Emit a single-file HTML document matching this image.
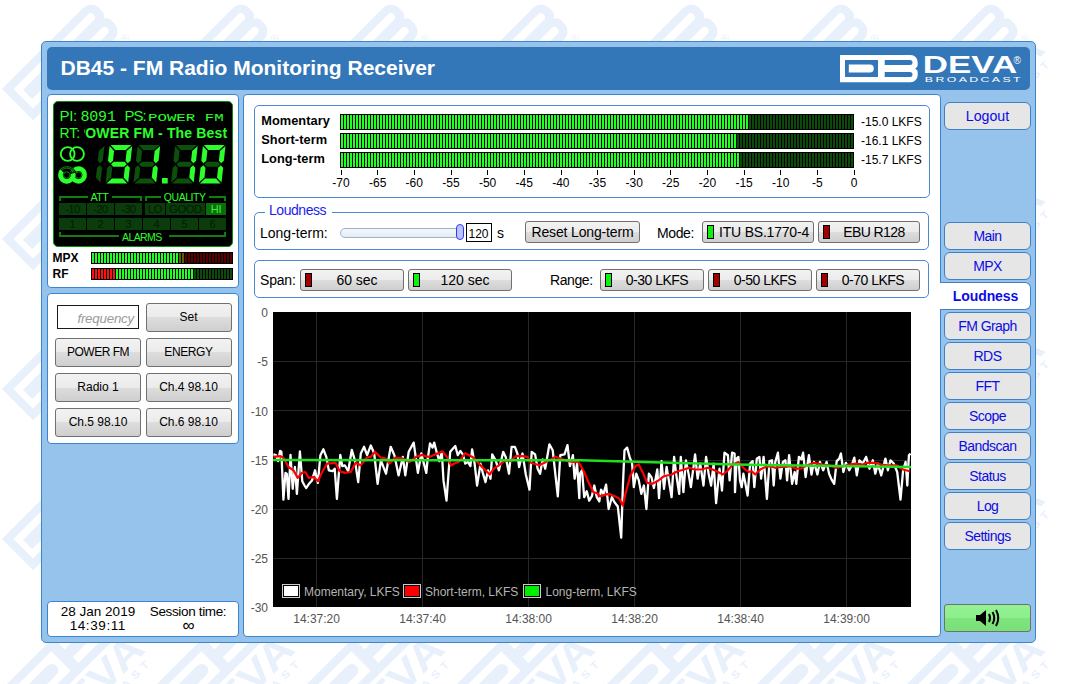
<!DOCTYPE html><html><head><meta charset="utf-8"><style>*{box-sizing:border-box;margin:0;padding:0}
html,body{width:1077px;height:684px;overflow:hidden;background:#fff;font-family:"Liberation Sans",sans-serif;color:#000}
.a{position:absolute}
#outer{left:41px;top:41px;width:995px;height:602px;background:#95c3ec;border:1px solid #3c85cd;border-radius:5px}
#hdr{left:47px;top:47px;width:983px;height:43px;background:#3477b8;border-radius:5px}
#title{left:60.5px;top:56.9px;line-height:21px;font-weight:bold;font-size:21px;letter-spacing:0px;color:#fff;white-space:nowrap}
.pnl{background:#fff;border:1px solid #3a85cf;border-radius:4px}
.box{border:1px solid #4a8ad2;border-radius:5px}
.t{position:absolute;white-space:nowrap}
.btn{position:absolute;border:1px solid #707070;border-radius:3px;background:linear-gradient(#f2f2f2 0%,#ebebeb 50%,#dddddd 50%,#cfcfcf 100%);font-size:14px;text-align:center;white-space:nowrap}
.btn.sm{font-size:12px}
.btn.grn{background:linear-gradient(#93f293 0%,#8cee8c 50%,#7fe47f 50%,#79e079 100%)}
.nav{position:absolute;left:944px;width:87px;height:28px;background:#e6e6e6;border:1px solid #3f80c8;border-radius:6px;color:#0c0ce4;font-size:14px;text-align:center;line-height:26.8px;letter-spacing:-0.55px}
.nav.sel{background:#fff;font-weight:bold;font-size:14px;letter-spacing:-0.1px;border-left:none;border-radius:0 6px 6px 0;left:941px;width:90px}
.ind{position:absolute;left:4px;top:3px;width:7px;height:14px;border:1px solid #000}
.g{background:#11ee11}.r{background:#a00000}
.bar{position:absolute;left:340px;width:514px;height:16px;border:1px solid #000;background:repeating-linear-gradient(90deg,#0c4a0c 0,#0c4a0c 2px,#000 2px,#000 3px)}
.lit{position:absolute;left:0;top:0;height:14px;background:repeating-linear-gradient(90deg,#22ff22 0,#22ff22 2px,#000 2px,#000 3px)}
</style></head><body>
<svg class="a" style="left:0;top:0" width="1077" height="684"><defs>
<pattern id="wmp" patternUnits="userSpaceOnUse" width="150" height="150" x="2.0" y="89.0">
<g transform="translate(-300,-300) rotate(-45) scale(1.62)"><g fill="#e8f0fc">
<path fill-rule="evenodd" d="M0 0 H70.5 A7 7 0 0 1 77.7 7 V8.5 A5 5 0 0 1 75 13.6 A5 5 0 0 1 77.7 18.7 V20.5 A7 7 0 0 1 70.5 27.2 H0 Z M5 5 V22 H38 V5 Z M44.7 5 V10 H70 A2.5 2.5 0 0 0 70 5 Z M44.7 17 V22 H70 A2.5 2.5 0 0 0 70 17 Z"/>
<path d="M8.8 9.6 H29.8 A4 4 0 0 1 29.8 17.6 H8.8 Z"/>
<text x="73.3" y="34" font-family="Liberation Sans" font-size="7">&#174;</text>
<text transform="translate(1.8,46.5) scale(1.2,1)" font-family="Liberation Sans" font-weight="bold" font-size="24">DEVA</text>
<text transform="translate(1,54.2) scale(1.2,1)" font-family="Liberation Sans" font-weight="bold" font-size="6.4" letter-spacing="2.6">BROADCAST</text>
</g></g>
<g transform="translate(-300,-150) rotate(-45) scale(1.62)"><g fill="#e8f0fc">
<path fill-rule="evenodd" d="M0 0 H70.5 A7 7 0 0 1 77.7 7 V8.5 A5 5 0 0 1 75 13.6 A5 5 0 0 1 77.7 18.7 V20.5 A7 7 0 0 1 70.5 27.2 H0 Z M5 5 V22 H38 V5 Z M44.7 5 V10 H70 A2.5 2.5 0 0 0 70 5 Z M44.7 17 V22 H70 A2.5 2.5 0 0 0 70 17 Z"/>
<path d="M8.8 9.6 H29.8 A4 4 0 0 1 29.8 17.6 H8.8 Z"/>
<text x="73.3" y="34" font-family="Liberation Sans" font-size="7">&#174;</text>
<text transform="translate(1.8,46.5) scale(1.2,1)" font-family="Liberation Sans" font-weight="bold" font-size="24">DEVA</text>
<text transform="translate(1,54.2) scale(1.2,1)" font-family="Liberation Sans" font-weight="bold" font-size="6.4" letter-spacing="2.6">BROADCAST</text>
</g></g>
<g transform="translate(-300,0) rotate(-45) scale(1.62)"><g fill="#e8f0fc">
<path fill-rule="evenodd" d="M0 0 H70.5 A7 7 0 0 1 77.7 7 V8.5 A5 5 0 0 1 75 13.6 A5 5 0 0 1 77.7 18.7 V20.5 A7 7 0 0 1 70.5 27.2 H0 Z M5 5 V22 H38 V5 Z M44.7 5 V10 H70 A2.5 2.5 0 0 0 70 5 Z M44.7 17 V22 H70 A2.5 2.5 0 0 0 70 17 Z"/>
<path d="M8.8 9.6 H29.8 A4 4 0 0 1 29.8 17.6 H8.8 Z"/>
<text x="73.3" y="34" font-family="Liberation Sans" font-size="7">&#174;</text>
<text transform="translate(1.8,46.5) scale(1.2,1)" font-family="Liberation Sans" font-weight="bold" font-size="24">DEVA</text>
<text transform="translate(1,54.2) scale(1.2,1)" font-family="Liberation Sans" font-weight="bold" font-size="6.4" letter-spacing="2.6">BROADCAST</text>
</g></g>
<g transform="translate(-300,150) rotate(-45) scale(1.62)"><g fill="#e8f0fc">
<path fill-rule="evenodd" d="M0 0 H70.5 A7 7 0 0 1 77.7 7 V8.5 A5 5 0 0 1 75 13.6 A5 5 0 0 1 77.7 18.7 V20.5 A7 7 0 0 1 70.5 27.2 H0 Z M5 5 V22 H38 V5 Z M44.7 5 V10 H70 A2.5 2.5 0 0 0 70 5 Z M44.7 17 V22 H70 A2.5 2.5 0 0 0 70 17 Z"/>
<path d="M8.8 9.6 H29.8 A4 4 0 0 1 29.8 17.6 H8.8 Z"/>
<text x="73.3" y="34" font-family="Liberation Sans" font-size="7">&#174;</text>
<text transform="translate(1.8,46.5) scale(1.2,1)" font-family="Liberation Sans" font-weight="bold" font-size="24">DEVA</text>
<text transform="translate(1,54.2) scale(1.2,1)" font-family="Liberation Sans" font-weight="bold" font-size="6.4" letter-spacing="2.6">BROADCAST</text>
</g></g>
<g transform="translate(-300,300) rotate(-45) scale(1.62)"><g fill="#e8f0fc">
<path fill-rule="evenodd" d="M0 0 H70.5 A7 7 0 0 1 77.7 7 V8.5 A5 5 0 0 1 75 13.6 A5 5 0 0 1 77.7 18.7 V20.5 A7 7 0 0 1 70.5 27.2 H0 Z M5 5 V22 H38 V5 Z M44.7 5 V10 H70 A2.5 2.5 0 0 0 70 5 Z M44.7 17 V22 H70 A2.5 2.5 0 0 0 70 17 Z"/>
<path d="M8.8 9.6 H29.8 A4 4 0 0 1 29.8 17.6 H8.8 Z"/>
<text x="73.3" y="34" font-family="Liberation Sans" font-size="7">&#174;</text>
<text transform="translate(1.8,46.5) scale(1.2,1)" font-family="Liberation Sans" font-weight="bold" font-size="24">DEVA</text>
<text transform="translate(1,54.2) scale(1.2,1)" font-family="Liberation Sans" font-weight="bold" font-size="6.4" letter-spacing="2.6">BROADCAST</text>
</g></g>
<g transform="translate(-150,-300) rotate(-45) scale(1.62)"><g fill="#e8f0fc">
<path fill-rule="evenodd" d="M0 0 H70.5 A7 7 0 0 1 77.7 7 V8.5 A5 5 0 0 1 75 13.6 A5 5 0 0 1 77.7 18.7 V20.5 A7 7 0 0 1 70.5 27.2 H0 Z M5 5 V22 H38 V5 Z M44.7 5 V10 H70 A2.5 2.5 0 0 0 70 5 Z M44.7 17 V22 H70 A2.5 2.5 0 0 0 70 17 Z"/>
<path d="M8.8 9.6 H29.8 A4 4 0 0 1 29.8 17.6 H8.8 Z"/>
<text x="73.3" y="34" font-family="Liberation Sans" font-size="7">&#174;</text>
<text transform="translate(1.8,46.5) scale(1.2,1)" font-family="Liberation Sans" font-weight="bold" font-size="24">DEVA</text>
<text transform="translate(1,54.2) scale(1.2,1)" font-family="Liberation Sans" font-weight="bold" font-size="6.4" letter-spacing="2.6">BROADCAST</text>
</g></g>
<g transform="translate(-150,-150) rotate(-45) scale(1.62)"><g fill="#e8f0fc">
<path fill-rule="evenodd" d="M0 0 H70.5 A7 7 0 0 1 77.7 7 V8.5 A5 5 0 0 1 75 13.6 A5 5 0 0 1 77.7 18.7 V20.5 A7 7 0 0 1 70.5 27.2 H0 Z M5 5 V22 H38 V5 Z M44.7 5 V10 H70 A2.5 2.5 0 0 0 70 5 Z M44.7 17 V22 H70 A2.5 2.5 0 0 0 70 17 Z"/>
<path d="M8.8 9.6 H29.8 A4 4 0 0 1 29.8 17.6 H8.8 Z"/>
<text x="73.3" y="34" font-family="Liberation Sans" font-size="7">&#174;</text>
<text transform="translate(1.8,46.5) scale(1.2,1)" font-family="Liberation Sans" font-weight="bold" font-size="24">DEVA</text>
<text transform="translate(1,54.2) scale(1.2,1)" font-family="Liberation Sans" font-weight="bold" font-size="6.4" letter-spacing="2.6">BROADCAST</text>
</g></g>
<g transform="translate(-150,0) rotate(-45) scale(1.62)"><g fill="#e8f0fc">
<path fill-rule="evenodd" d="M0 0 H70.5 A7 7 0 0 1 77.7 7 V8.5 A5 5 0 0 1 75 13.6 A5 5 0 0 1 77.7 18.7 V20.5 A7 7 0 0 1 70.5 27.2 H0 Z M5 5 V22 H38 V5 Z M44.7 5 V10 H70 A2.5 2.5 0 0 0 70 5 Z M44.7 17 V22 H70 A2.5 2.5 0 0 0 70 17 Z"/>
<path d="M8.8 9.6 H29.8 A4 4 0 0 1 29.8 17.6 H8.8 Z"/>
<text x="73.3" y="34" font-family="Liberation Sans" font-size="7">&#174;</text>
<text transform="translate(1.8,46.5) scale(1.2,1)" font-family="Liberation Sans" font-weight="bold" font-size="24">DEVA</text>
<text transform="translate(1,54.2) scale(1.2,1)" font-family="Liberation Sans" font-weight="bold" font-size="6.4" letter-spacing="2.6">BROADCAST</text>
</g></g>
<g transform="translate(-150,150) rotate(-45) scale(1.62)"><g fill="#e8f0fc">
<path fill-rule="evenodd" d="M0 0 H70.5 A7 7 0 0 1 77.7 7 V8.5 A5 5 0 0 1 75 13.6 A5 5 0 0 1 77.7 18.7 V20.5 A7 7 0 0 1 70.5 27.2 H0 Z M5 5 V22 H38 V5 Z M44.7 5 V10 H70 A2.5 2.5 0 0 0 70 5 Z M44.7 17 V22 H70 A2.5 2.5 0 0 0 70 17 Z"/>
<path d="M8.8 9.6 H29.8 A4 4 0 0 1 29.8 17.6 H8.8 Z"/>
<text x="73.3" y="34" font-family="Liberation Sans" font-size="7">&#174;</text>
<text transform="translate(1.8,46.5) scale(1.2,1)" font-family="Liberation Sans" font-weight="bold" font-size="24">DEVA</text>
<text transform="translate(1,54.2) scale(1.2,1)" font-family="Liberation Sans" font-weight="bold" font-size="6.4" letter-spacing="2.6">BROADCAST</text>
</g></g>
<g transform="translate(-150,300) rotate(-45) scale(1.62)"><g fill="#e8f0fc">
<path fill-rule="evenodd" d="M0 0 H70.5 A7 7 0 0 1 77.7 7 V8.5 A5 5 0 0 1 75 13.6 A5 5 0 0 1 77.7 18.7 V20.5 A7 7 0 0 1 70.5 27.2 H0 Z M5 5 V22 H38 V5 Z M44.7 5 V10 H70 A2.5 2.5 0 0 0 70 5 Z M44.7 17 V22 H70 A2.5 2.5 0 0 0 70 17 Z"/>
<path d="M8.8 9.6 H29.8 A4 4 0 0 1 29.8 17.6 H8.8 Z"/>
<text x="73.3" y="34" font-family="Liberation Sans" font-size="7">&#174;</text>
<text transform="translate(1.8,46.5) scale(1.2,1)" font-family="Liberation Sans" font-weight="bold" font-size="24">DEVA</text>
<text transform="translate(1,54.2) scale(1.2,1)" font-family="Liberation Sans" font-weight="bold" font-size="6.4" letter-spacing="2.6">BROADCAST</text>
</g></g>
<g transform="translate(0,-300) rotate(-45) scale(1.62)"><g fill="#e8f0fc">
<path fill-rule="evenodd" d="M0 0 H70.5 A7 7 0 0 1 77.7 7 V8.5 A5 5 0 0 1 75 13.6 A5 5 0 0 1 77.7 18.7 V20.5 A7 7 0 0 1 70.5 27.2 H0 Z M5 5 V22 H38 V5 Z M44.7 5 V10 H70 A2.5 2.5 0 0 0 70 5 Z M44.7 17 V22 H70 A2.5 2.5 0 0 0 70 17 Z"/>
<path d="M8.8 9.6 H29.8 A4 4 0 0 1 29.8 17.6 H8.8 Z"/>
<text x="73.3" y="34" font-family="Liberation Sans" font-size="7">&#174;</text>
<text transform="translate(1.8,46.5) scale(1.2,1)" font-family="Liberation Sans" font-weight="bold" font-size="24">DEVA</text>
<text transform="translate(1,54.2) scale(1.2,1)" font-family="Liberation Sans" font-weight="bold" font-size="6.4" letter-spacing="2.6">BROADCAST</text>
</g></g>
<g transform="translate(0,-150) rotate(-45) scale(1.62)"><g fill="#e8f0fc">
<path fill-rule="evenodd" d="M0 0 H70.5 A7 7 0 0 1 77.7 7 V8.5 A5 5 0 0 1 75 13.6 A5 5 0 0 1 77.7 18.7 V20.5 A7 7 0 0 1 70.5 27.2 H0 Z M5 5 V22 H38 V5 Z M44.7 5 V10 H70 A2.5 2.5 0 0 0 70 5 Z M44.7 17 V22 H70 A2.5 2.5 0 0 0 70 17 Z"/>
<path d="M8.8 9.6 H29.8 A4 4 0 0 1 29.8 17.6 H8.8 Z"/>
<text x="73.3" y="34" font-family="Liberation Sans" font-size="7">&#174;</text>
<text transform="translate(1.8,46.5) scale(1.2,1)" font-family="Liberation Sans" font-weight="bold" font-size="24">DEVA</text>
<text transform="translate(1,54.2) scale(1.2,1)" font-family="Liberation Sans" font-weight="bold" font-size="6.4" letter-spacing="2.6">BROADCAST</text>
</g></g>
<g transform="translate(0,0) rotate(-45) scale(1.62)"><g fill="#e8f0fc">
<path fill-rule="evenodd" d="M0 0 H70.5 A7 7 0 0 1 77.7 7 V8.5 A5 5 0 0 1 75 13.6 A5 5 0 0 1 77.7 18.7 V20.5 A7 7 0 0 1 70.5 27.2 H0 Z M5 5 V22 H38 V5 Z M44.7 5 V10 H70 A2.5 2.5 0 0 0 70 5 Z M44.7 17 V22 H70 A2.5 2.5 0 0 0 70 17 Z"/>
<path d="M8.8 9.6 H29.8 A4 4 0 0 1 29.8 17.6 H8.8 Z"/>
<text x="73.3" y="34" font-family="Liberation Sans" font-size="7">&#174;</text>
<text transform="translate(1.8,46.5) scale(1.2,1)" font-family="Liberation Sans" font-weight="bold" font-size="24">DEVA</text>
<text transform="translate(1,54.2) scale(1.2,1)" font-family="Liberation Sans" font-weight="bold" font-size="6.4" letter-spacing="2.6">BROADCAST</text>
</g></g>
<g transform="translate(0,150) rotate(-45) scale(1.62)"><g fill="#e8f0fc">
<path fill-rule="evenodd" d="M0 0 H70.5 A7 7 0 0 1 77.7 7 V8.5 A5 5 0 0 1 75 13.6 A5 5 0 0 1 77.7 18.7 V20.5 A7 7 0 0 1 70.5 27.2 H0 Z M5 5 V22 H38 V5 Z M44.7 5 V10 H70 A2.5 2.5 0 0 0 70 5 Z M44.7 17 V22 H70 A2.5 2.5 0 0 0 70 17 Z"/>
<path d="M8.8 9.6 H29.8 A4 4 0 0 1 29.8 17.6 H8.8 Z"/>
<text x="73.3" y="34" font-family="Liberation Sans" font-size="7">&#174;</text>
<text transform="translate(1.8,46.5) scale(1.2,1)" font-family="Liberation Sans" font-weight="bold" font-size="24">DEVA</text>
<text transform="translate(1,54.2) scale(1.2,1)" font-family="Liberation Sans" font-weight="bold" font-size="6.4" letter-spacing="2.6">BROADCAST</text>
</g></g>
<g transform="translate(0,300) rotate(-45) scale(1.62)"><g fill="#e8f0fc">
<path fill-rule="evenodd" d="M0 0 H70.5 A7 7 0 0 1 77.7 7 V8.5 A5 5 0 0 1 75 13.6 A5 5 0 0 1 77.7 18.7 V20.5 A7 7 0 0 1 70.5 27.2 H0 Z M5 5 V22 H38 V5 Z M44.7 5 V10 H70 A2.5 2.5 0 0 0 70 5 Z M44.7 17 V22 H70 A2.5 2.5 0 0 0 70 17 Z"/>
<path d="M8.8 9.6 H29.8 A4 4 0 0 1 29.8 17.6 H8.8 Z"/>
<text x="73.3" y="34" font-family="Liberation Sans" font-size="7">&#174;</text>
<text transform="translate(1.8,46.5) scale(1.2,1)" font-family="Liberation Sans" font-weight="bold" font-size="24">DEVA</text>
<text transform="translate(1,54.2) scale(1.2,1)" font-family="Liberation Sans" font-weight="bold" font-size="6.4" letter-spacing="2.6">BROADCAST</text>
</g></g>
<g transform="translate(150,-300) rotate(-45) scale(1.62)"><g fill="#e8f0fc">
<path fill-rule="evenodd" d="M0 0 H70.5 A7 7 0 0 1 77.7 7 V8.5 A5 5 0 0 1 75 13.6 A5 5 0 0 1 77.7 18.7 V20.5 A7 7 0 0 1 70.5 27.2 H0 Z M5 5 V22 H38 V5 Z M44.7 5 V10 H70 A2.5 2.5 0 0 0 70 5 Z M44.7 17 V22 H70 A2.5 2.5 0 0 0 70 17 Z"/>
<path d="M8.8 9.6 H29.8 A4 4 0 0 1 29.8 17.6 H8.8 Z"/>
<text x="73.3" y="34" font-family="Liberation Sans" font-size="7">&#174;</text>
<text transform="translate(1.8,46.5) scale(1.2,1)" font-family="Liberation Sans" font-weight="bold" font-size="24">DEVA</text>
<text transform="translate(1,54.2) scale(1.2,1)" font-family="Liberation Sans" font-weight="bold" font-size="6.4" letter-spacing="2.6">BROADCAST</text>
</g></g>
<g transform="translate(150,-150) rotate(-45) scale(1.62)"><g fill="#e8f0fc">
<path fill-rule="evenodd" d="M0 0 H70.5 A7 7 0 0 1 77.7 7 V8.5 A5 5 0 0 1 75 13.6 A5 5 0 0 1 77.7 18.7 V20.5 A7 7 0 0 1 70.5 27.2 H0 Z M5 5 V22 H38 V5 Z M44.7 5 V10 H70 A2.5 2.5 0 0 0 70 5 Z M44.7 17 V22 H70 A2.5 2.5 0 0 0 70 17 Z"/>
<path d="M8.8 9.6 H29.8 A4 4 0 0 1 29.8 17.6 H8.8 Z"/>
<text x="73.3" y="34" font-family="Liberation Sans" font-size="7">&#174;</text>
<text transform="translate(1.8,46.5) scale(1.2,1)" font-family="Liberation Sans" font-weight="bold" font-size="24">DEVA</text>
<text transform="translate(1,54.2) scale(1.2,1)" font-family="Liberation Sans" font-weight="bold" font-size="6.4" letter-spacing="2.6">BROADCAST</text>
</g></g>
<g transform="translate(150,0) rotate(-45) scale(1.62)"><g fill="#e8f0fc">
<path fill-rule="evenodd" d="M0 0 H70.5 A7 7 0 0 1 77.7 7 V8.5 A5 5 0 0 1 75 13.6 A5 5 0 0 1 77.7 18.7 V20.5 A7 7 0 0 1 70.5 27.2 H0 Z M5 5 V22 H38 V5 Z M44.7 5 V10 H70 A2.5 2.5 0 0 0 70 5 Z M44.7 17 V22 H70 A2.5 2.5 0 0 0 70 17 Z"/>
<path d="M8.8 9.6 H29.8 A4 4 0 0 1 29.8 17.6 H8.8 Z"/>
<text x="73.3" y="34" font-family="Liberation Sans" font-size="7">&#174;</text>
<text transform="translate(1.8,46.5) scale(1.2,1)" font-family="Liberation Sans" font-weight="bold" font-size="24">DEVA</text>
<text transform="translate(1,54.2) scale(1.2,1)" font-family="Liberation Sans" font-weight="bold" font-size="6.4" letter-spacing="2.6">BROADCAST</text>
</g></g>
<g transform="translate(150,150) rotate(-45) scale(1.62)"><g fill="#e8f0fc">
<path fill-rule="evenodd" d="M0 0 H70.5 A7 7 0 0 1 77.7 7 V8.5 A5 5 0 0 1 75 13.6 A5 5 0 0 1 77.7 18.7 V20.5 A7 7 0 0 1 70.5 27.2 H0 Z M5 5 V22 H38 V5 Z M44.7 5 V10 H70 A2.5 2.5 0 0 0 70 5 Z M44.7 17 V22 H70 A2.5 2.5 0 0 0 70 17 Z"/>
<path d="M8.8 9.6 H29.8 A4 4 0 0 1 29.8 17.6 H8.8 Z"/>
<text x="73.3" y="34" font-family="Liberation Sans" font-size="7">&#174;</text>
<text transform="translate(1.8,46.5) scale(1.2,1)" font-family="Liberation Sans" font-weight="bold" font-size="24">DEVA</text>
<text transform="translate(1,54.2) scale(1.2,1)" font-family="Liberation Sans" font-weight="bold" font-size="6.4" letter-spacing="2.6">BROADCAST</text>
</g></g>
<g transform="translate(150,300) rotate(-45) scale(1.62)"><g fill="#e8f0fc">
<path fill-rule="evenodd" d="M0 0 H70.5 A7 7 0 0 1 77.7 7 V8.5 A5 5 0 0 1 75 13.6 A5 5 0 0 1 77.7 18.7 V20.5 A7 7 0 0 1 70.5 27.2 H0 Z M5 5 V22 H38 V5 Z M44.7 5 V10 H70 A2.5 2.5 0 0 0 70 5 Z M44.7 17 V22 H70 A2.5 2.5 0 0 0 70 17 Z"/>
<path d="M8.8 9.6 H29.8 A4 4 0 0 1 29.8 17.6 H8.8 Z"/>
<text x="73.3" y="34" font-family="Liberation Sans" font-size="7">&#174;</text>
<text transform="translate(1.8,46.5) scale(1.2,1)" font-family="Liberation Sans" font-weight="bold" font-size="24">DEVA</text>
<text transform="translate(1,54.2) scale(1.2,1)" font-family="Liberation Sans" font-weight="bold" font-size="6.4" letter-spacing="2.6">BROADCAST</text>
</g></g>
<g transform="translate(300,-300) rotate(-45) scale(1.62)"><g fill="#e8f0fc">
<path fill-rule="evenodd" d="M0 0 H70.5 A7 7 0 0 1 77.7 7 V8.5 A5 5 0 0 1 75 13.6 A5 5 0 0 1 77.7 18.7 V20.5 A7 7 0 0 1 70.5 27.2 H0 Z M5 5 V22 H38 V5 Z M44.7 5 V10 H70 A2.5 2.5 0 0 0 70 5 Z M44.7 17 V22 H70 A2.5 2.5 0 0 0 70 17 Z"/>
<path d="M8.8 9.6 H29.8 A4 4 0 0 1 29.8 17.6 H8.8 Z"/>
<text x="73.3" y="34" font-family="Liberation Sans" font-size="7">&#174;</text>
<text transform="translate(1.8,46.5) scale(1.2,1)" font-family="Liberation Sans" font-weight="bold" font-size="24">DEVA</text>
<text transform="translate(1,54.2) scale(1.2,1)" font-family="Liberation Sans" font-weight="bold" font-size="6.4" letter-spacing="2.6">BROADCAST</text>
</g></g>
<g transform="translate(300,-150) rotate(-45) scale(1.62)"><g fill="#e8f0fc">
<path fill-rule="evenodd" d="M0 0 H70.5 A7 7 0 0 1 77.7 7 V8.5 A5 5 0 0 1 75 13.6 A5 5 0 0 1 77.7 18.7 V20.5 A7 7 0 0 1 70.5 27.2 H0 Z M5 5 V22 H38 V5 Z M44.7 5 V10 H70 A2.5 2.5 0 0 0 70 5 Z M44.7 17 V22 H70 A2.5 2.5 0 0 0 70 17 Z"/>
<path d="M8.8 9.6 H29.8 A4 4 0 0 1 29.8 17.6 H8.8 Z"/>
<text x="73.3" y="34" font-family="Liberation Sans" font-size="7">&#174;</text>
<text transform="translate(1.8,46.5) scale(1.2,1)" font-family="Liberation Sans" font-weight="bold" font-size="24">DEVA</text>
<text transform="translate(1,54.2) scale(1.2,1)" font-family="Liberation Sans" font-weight="bold" font-size="6.4" letter-spacing="2.6">BROADCAST</text>
</g></g>
<g transform="translate(300,0) rotate(-45) scale(1.62)"><g fill="#e8f0fc">
<path fill-rule="evenodd" d="M0 0 H70.5 A7 7 0 0 1 77.7 7 V8.5 A5 5 0 0 1 75 13.6 A5 5 0 0 1 77.7 18.7 V20.5 A7 7 0 0 1 70.5 27.2 H0 Z M5 5 V22 H38 V5 Z M44.7 5 V10 H70 A2.5 2.5 0 0 0 70 5 Z M44.7 17 V22 H70 A2.5 2.5 0 0 0 70 17 Z"/>
<path d="M8.8 9.6 H29.8 A4 4 0 0 1 29.8 17.6 H8.8 Z"/>
<text x="73.3" y="34" font-family="Liberation Sans" font-size="7">&#174;</text>
<text transform="translate(1.8,46.5) scale(1.2,1)" font-family="Liberation Sans" font-weight="bold" font-size="24">DEVA</text>
<text transform="translate(1,54.2) scale(1.2,1)" font-family="Liberation Sans" font-weight="bold" font-size="6.4" letter-spacing="2.6">BROADCAST</text>
</g></g>
<g transform="translate(300,150) rotate(-45) scale(1.62)"><g fill="#e8f0fc">
<path fill-rule="evenodd" d="M0 0 H70.5 A7 7 0 0 1 77.7 7 V8.5 A5 5 0 0 1 75 13.6 A5 5 0 0 1 77.7 18.7 V20.5 A7 7 0 0 1 70.5 27.2 H0 Z M5 5 V22 H38 V5 Z M44.7 5 V10 H70 A2.5 2.5 0 0 0 70 5 Z M44.7 17 V22 H70 A2.5 2.5 0 0 0 70 17 Z"/>
<path d="M8.8 9.6 H29.8 A4 4 0 0 1 29.8 17.6 H8.8 Z"/>
<text x="73.3" y="34" font-family="Liberation Sans" font-size="7">&#174;</text>
<text transform="translate(1.8,46.5) scale(1.2,1)" font-family="Liberation Sans" font-weight="bold" font-size="24">DEVA</text>
<text transform="translate(1,54.2) scale(1.2,1)" font-family="Liberation Sans" font-weight="bold" font-size="6.4" letter-spacing="2.6">BROADCAST</text>
</g></g>
<g transform="translate(300,300) rotate(-45) scale(1.62)"><g fill="#e8f0fc">
<path fill-rule="evenodd" d="M0 0 H70.5 A7 7 0 0 1 77.7 7 V8.5 A5 5 0 0 1 75 13.6 A5 5 0 0 1 77.7 18.7 V20.5 A7 7 0 0 1 70.5 27.2 H0 Z M5 5 V22 H38 V5 Z M44.7 5 V10 H70 A2.5 2.5 0 0 0 70 5 Z M44.7 17 V22 H70 A2.5 2.5 0 0 0 70 17 Z"/>
<path d="M8.8 9.6 H29.8 A4 4 0 0 1 29.8 17.6 H8.8 Z"/>
<text x="73.3" y="34" font-family="Liberation Sans" font-size="7">&#174;</text>
<text transform="translate(1.8,46.5) scale(1.2,1)" font-family="Liberation Sans" font-weight="bold" font-size="24">DEVA</text>
<text transform="translate(1,54.2) scale(1.2,1)" font-family="Liberation Sans" font-weight="bold" font-size="6.4" letter-spacing="2.6">BROADCAST</text>
</g></g>
</pattern></defs><rect width="1048" height="684" fill="url(#wmp)"/></svg>
<div class="a" id="outer"></div>
<div class="a" id="hdr"></div>
<div class="a" id="title">DB45 - FM Radio Monitoring Receiver</div>
<svg class="a" style="left:835px;top:50px" width="195" height="38" viewBox="835 50 195 38">
<path fill="#fff" fill-rule="evenodd" d="M840 55 H910.5 A7 7 0 0 1 917.7 62 V63.5 A5 5 0 0 1 915 68.6 A5 5 0 0 1 917.7 73.7 V75.5 A7 7 0 0 1 910.5 82.2 H840 Z
 M845 60 V77 H878 V60 Z M884.7 60 V65 H910 A2.5 2.5 0 0 0 910 60 Z M884.7 72 V77 H910 A2.5 2.5 0 0 0 910 72 Z"/>
<path fill="#fff" d="M848.8 64.6 H869.8 A4 4 0 0 1 869.8 72.6 H848.8 Z"/>
<text transform="translate(922.8,73) scale(1.5,1)" fill="#fff" font-family="Liberation Sans" font-weight="bold" font-size="23.3">DEVA</text>
<text x="1013.5" y="63.5" fill="#fff" font-family="Liberation Sans" font-size="10">&#174;</text>
<text transform="translate(924.8,81.8) scale(1.9,1)" fill="#fff" font-family="Liberation Sans" font-size="6.5" letter-spacing="1.25">BROADCAST</text>
</svg>

<div class="a pnl" style="left:47px;top:94px;width:192px;height:194px"></div>
<div class="a pnl" style="left:47px;top:293px;width:192px;height:151px"></div>
<div class="a pnl" style="left:47px;top:601px;width:192px;height:36px"></div>
<div class="a pnl" style="left:243px;top:94px;width:698px;height:543px"></div>
<div class="nav" style="top:102px;font-size:14.2px;letter-spacing:0">Logout</div>
<div class="nav" style="top:222px">Main</div>
<div class="nav" style="top:252px">MPX</div>
<div class="nav sel" style="top:282px">Loudness</div>
<div class="nav" style="top:312px">FM Graph</div>
<div class="nav" style="top:342px">RDS</div>
<div class="nav" style="top:372px">FFT</div>
<div class="nav" style="top:402px">Scope</div>
<div class="nav" style="top:432px">Bandscan</div>
<div class="nav" style="top:462px">Status</div>
<div class="nav" style="top:492px">Log</div>
<div class="nav" style="top:522px">Settings</div>
<div class="a" style="left:940px;top:283px;width:4px;height:26px;background:#fff"></div>
<div class="btn grn" style="left:944px;top:604px;width:87px;height:28px"><svg style="position:absolute;left:30px;top:3.5px" width="28" height="18" viewBox="0 0 28 18">
<path d="M1 6 H5 L11 1 V17 L5 12 H1 Z" fill="#000"/>
<path d="M14 5 Q16 9 14 13" stroke="#000" stroke-width="2" fill="none"/>
<path d="M17.5 3 Q21 9 17.5 15" stroke="#000" stroke-width="2" fill="none"/>
<path d="M21 1 Q25.5 9 21 17" stroke="#000" stroke-width="2" fill="none"/>
</svg>
</div>
<div class="a box" style="left:254px;top:105px;width:676px;height:93px"></div>
<div class="t" style="left:261.2px;top:114.96px;font-size:12.8px;line-height:12.8px;font-weight:bold;letter-spacing:0.05px">Momentary</div>
<div class="bar" style="top:114px"><div class="lit" style="width:407px"></div></div>
<div class="t" style="left:861px;top:115.84px;font-size:12px;line-height:12px;">-15.0 LKFS</div>
<div class="t" style="left:261.2px;top:133.96px;font-size:12.8px;line-height:12.8px;font-weight:bold;letter-spacing:0.05px">Short-term</div>
<div class="bar" style="top:133px"><div class="lit" style="width:395px"></div></div>
<div class="t" style="left:861px;top:134.84px;font-size:12px;line-height:12px;">-16.1 LKFS</div>
<div class="t" style="left:261.2px;top:152.96px;font-size:12.8px;line-height:12.8px;font-weight:bold;letter-spacing:0.05px">Long-term</div>
<div class="bar" style="top:152px"><div class="lit" style="width:398px"></div></div>
<div class="t" style="left:861px;top:153.84px;font-size:12px;line-height:12px;">-15.7 LKFS</div>
<div class="a" style="left:341px;top:170px;width:1px;height:5px;background:#000"></div>
<div class="t" style="left:141.0px;width:400px;text-align:center;top:176.84px;font-size:12px;line-height:12px;">-70</div>
<div class="a" style="left:377px;top:170px;width:1px;height:5px;background:#000"></div>
<div class="t" style="left:177.64285714285717px;width:400px;text-align:center;top:176.84px;font-size:12px;line-height:12px;">-65</div>
<div class="a" style="left:414px;top:170px;width:1px;height:5px;background:#000"></div>
<div class="t" style="left:214.28571428571428px;width:400px;text-align:center;top:176.84px;font-size:12px;line-height:12px;">-60</div>
<div class="a" style="left:451px;top:170px;width:1px;height:5px;background:#000"></div>
<div class="t" style="left:250.92857142857144px;width:400px;text-align:center;top:176.84px;font-size:12px;line-height:12px;">-55</div>
<div class="a" style="left:487px;top:170px;width:1px;height:5px;background:#000"></div>
<div class="t" style="left:287.57142857142856px;width:400px;text-align:center;top:176.84px;font-size:12px;line-height:12px;">-50</div>
<div class="a" style="left:524px;top:170px;width:1px;height:5px;background:#000"></div>
<div class="t" style="left:324.2142857142858px;width:400px;text-align:center;top:176.84px;font-size:12px;line-height:12px;">-45</div>
<div class="a" style="left:561px;top:170px;width:1px;height:5px;background:#000"></div>
<div class="t" style="left:360.8571428571429px;width:400px;text-align:center;top:176.84px;font-size:12px;line-height:12px;">-40</div>
<div class="a" style="left:597px;top:170px;width:1px;height:5px;background:#000"></div>
<div class="t" style="left:397.5px;width:400px;text-align:center;top:176.84px;font-size:12px;line-height:12px;">-35</div>
<div class="a" style="left:634px;top:170px;width:1px;height:5px;background:#000"></div>
<div class="t" style="left:434.1428571428571px;width:400px;text-align:center;top:176.84px;font-size:12px;line-height:12px;">-30</div>
<div class="a" style="left:670px;top:170px;width:1px;height:5px;background:#000"></div>
<div class="t" style="left:470.78571428571433px;width:400px;text-align:center;top:176.84px;font-size:12px;line-height:12px;">-25</div>
<div class="a" style="left:707px;top:170px;width:1px;height:5px;background:#000"></div>
<div class="t" style="left:507.42857142857144px;width:400px;text-align:center;top:176.84px;font-size:12px;line-height:12px;">-20</div>
<div class="a" style="left:744px;top:170px;width:1px;height:5px;background:#000"></div>
<div class="t" style="left:544.0714285714287px;width:400px;text-align:center;top:176.84px;font-size:12px;line-height:12px;">-15</div>
<div class="a" style="left:780px;top:170px;width:1px;height:5px;background:#000"></div>
<div class="t" style="left:580.7142857142858px;width:400px;text-align:center;top:176.84px;font-size:12px;line-height:12px;">-10</div>
<div class="a" style="left:817px;top:170px;width:1px;height:5px;background:#000"></div>
<div class="t" style="left:617.3571428571429px;width:400px;text-align:center;top:176.84px;font-size:12px;line-height:12px;">-5</div>
<div class="a" style="left:854px;top:170px;width:1px;height:5px;background:#000"></div>
<div class="t" style="left:654.0px;width:400px;text-align:center;top:176.84px;font-size:12px;line-height:12px;">0</div>
<div class="a box" style="left:254px;top:212px;width:675px;height:38px"></div>
<div class="a" style="left:265px;top:205px;width:67px;height:12px;background:#fff"></div>
<div class="t" style="left:269px;top:203.15px;font-size:14px;line-height:14px;color:#1c1cf0;letter-spacing:-0.45px">Loudness</div>
<div class="t" style="left:260px;top:226.15px;font-size:14px;line-height:14px;">Long-term:</div>
<div class="a" style="left:340px;top:228px;width:122px;height:10px;border:1px solid #9ab4cc;border-radius:5px;background:linear-gradient(#f4f7fa,#e6ecf2)"></div>
<div class="a" style="left:456px;top:224px;width:8px;height:16px;border:1px solid #3838f0;border-radius:4px;background:#b8c4ff"></div>
<div class="a" style="left:466px;top:223px;width:26px;height:19px;border:1px solid #000;background:#fff"></div>
<div class="t" style="left:468.5px;top:227.84px;font-size:12px;line-height:12px;">120</div>
<div class="t" style="left:497px;top:226.15px;font-size:14px;line-height:14px;">s</div>
<div class="btn" style="left:525px;top:221px;width:115px;height:22px;line-height:20px;letter-spacing:-0.15px">Reset Long-term</div>
<div class="t" style="left:657px;top:226.15px;font-size:14px;line-height:14px;letter-spacing:-0.4px">Mode:</div>
<div class="btn" style="left:702px;top:221px;width:112px;height:22px;line-height:20px;padding-left:12px;letter-spacing:-0.2px"><div class="ind g"></div>ITU BS.1770-4</div>
<div class="btn" style="left:818px;top:221px;width:102px;height:22px;line-height:20px;padding-left:10px;letter-spacing:-0.6px"><div class="ind r"></div>EBU R128</div>
<div class="a box" style="left:254px;top:260px;width:675px;height:38px"></div>
<div class="t" style="left:260px;top:273.15px;font-size:14px;line-height:14px;letter-spacing:-0.2px">Span:</div>
<div class="btn" style="left:300px;top:269px;width:104px;height:22px;line-height:20px;padding-left:10px;letter-spacing:0px"><div class="ind r"></div>60 sec</div>
<div class="btn" style="left:408px;top:269px;width:104px;height:22px;line-height:20px;padding-left:10px;letter-spacing:0px"><div class="ind g"></div>120 sec</div>
<div class="t" style="left:550px;top:273.15px;font-size:14px;line-height:14px;letter-spacing:-0.4px">Range:</div>
<div class="btn" style="left:600px;top:269px;width:104px;height:22px;line-height:20px;padding-left:10px;letter-spacing:-0.5px"><div class="ind g"></div>0-30 LKFS</div>
<div class="btn" style="left:708px;top:269px;width:104px;height:22px;line-height:20px;padding-left:10px;letter-spacing:-0.5px"><div class="ind r"></div>0-50 LKFS</div>
<div class="btn" style="left:816px;top:269px;width:104px;height:22px;line-height:20px;padding-left:10px;letter-spacing:-0.5px"><div class="ind r"></div>0-70 LKFS</div>
<svg class="a" style="left:0;top:0" width="1077" height="684">
<rect x="273" y="312" width="638" height="295" fill="#000"/>
<line x1="273" x2="911" y1="361.5" y2="361.5" stroke="#272727" stroke-width="1"/>
<line x1="273" x2="911" y1="410.5" y2="410.5" stroke="#272727" stroke-width="1"/>
<line x1="273" x2="911" y1="460.5" y2="460.5" stroke="#272727" stroke-width="1"/>
<line x1="273" x2="911" y1="509.5" y2="509.5" stroke="#272727" stroke-width="1"/>
<line x1="273" x2="911" y1="558.5" y2="558.5" stroke="#272727" stroke-width="1"/>
<line x1="316.5" x2="316.5" y1="312" y2="607" stroke="#272727" stroke-width="1"/>
<line x1="422.5" x2="422.5" y1="312" y2="607" stroke="#272727" stroke-width="1"/>
<line x1="528.5" x2="528.5" y1="312" y2="607" stroke="#272727" stroke-width="1"/>
<line x1="634.5" x2="634.5" y1="312" y2="607" stroke="#272727" stroke-width="1"/>
<line x1="740.5" x2="740.5" y1="312" y2="607" stroke="#272727" stroke-width="1"/>
<line x1="846.5" x2="846.5" y1="312" y2="607" stroke="#272727" stroke-width="1"/>
<clipPath id="cc"><rect x="273" y="312" width="638" height="295"/></clipPath><g clip-path="url(#cc)">
<polyline points="273.4,454.4 275.9,455.2 278.1,461.1 280.1,451.0 281.4,451.8 283.4,499.7 285.5,472.9 286.8,473.7 288.5,498.9 290.5,454.9 292.7,488.8 294.9,467.0 296.9,493.9 299.9,451.5 302.3,481.3 304.5,485.5 306.1,488.0 309.0,483.8 312.0,480.4 315.0,470.3 317.9,482.9 320.4,455.2 323.4,449.3 326.3,456.9 328.8,470.3 332.5,471.2 334.7,468.7 336.9,498.9 340.3,454.9 342.3,466.1 344.8,465.3 348.2,471.2 351.8,449.8 354.9,460.3 358.2,482.1 360.8,453.5 364.1,446.8 367.1,455.2 370.8,445.5 374.2,453.5 377.6,483.8 380.9,460.3 386.0,473.7 390.7,446.8 394.4,455.2 398.6,475.4 402.8,456.9 405.3,475.4 408.7,451.8 413.7,442.6 417.9,472.9 421.3,453.5 426.3,472.9 427.5,460.3 430.0,443.4 432.6,447.6 434.2,442.6 436.8,452.7 439.3,461.1 441.8,451.8 443.5,480.4 446.5,500.6 448.5,473.7 450.2,451.8 455.3,446.0 457.8,455.2 460.3,451.0 462.8,454.4 465.3,463.6 467.9,461.9 470.4,466.1 472.1,449.3 474.6,463.6 477.1,485.5 480.5,463.6 483.0,473.7 485.5,482.1 488.0,470.3 490.5,478.7 492.2,454.4 495.6,460.3 498.9,470.3 503.2,451.8 505.7,456.9 509.0,473.7 511.6,446.8 514.9,446.8 517.4,453.5 519.1,467.0 522.5,453.5 525.8,474.5 529.5,489.7 531.7,451.8 535.1,454.4 537.6,468.7 540.1,473.7 542.6,459.4 545.2,468.7 549.4,444.3 552.7,450.2 557.8,496.4 560.3,455.2 564.5,454.4 567.5,445.1 569.9,466.1 572.9,455.2 574.6,478.7 577.1,463.6 579.3,498.1 580.0,473.7 582.0,470.3 584.2,497.2 586.7,491.3 589.2,500.6 591.8,496.4 594.3,485.5 596.8,497.2 599.3,501.4 601.0,489.7 603.5,493.9 606.1,484.6 608.6,509.0 611.9,497.2 614.5,502.3 617.8,506.5 621.2,537.6 622.9,485.5 624.5,450.2 627.1,447.6 629.6,456.9 632.1,463.6 633.8,487.1 636.3,473.7 638.8,480.4 641.3,493.9 643.9,485.5 646.4,509.0 648.9,473.7 651.4,477.1 653.9,488.0 657.3,469.5 659.0,498.1 661.5,461.1 664.0,488.8 666.6,467.0 669.1,482.1 671.6,497.2 674.1,456.9 676.6,477.1 679.2,493.9 680.8,456.9 683.4,492.2 685.9,460.3 688.4,472.9 690.9,487.1 695.1,454.4 697.6,478.7 700.2,463.6 703.5,485.5 706.1,456.9 708.6,473.7 711.1,485.5 713.6,463.6 716.1,503.1 719.5,468.7 722.0,490.5 724.5,452.7 727.9,455.2 729.6,480.4 732.1,452.7 734.6,453.5 735.0,492.2 736.7,458.6 738.4,456.9 740.0,480.4 741.7,487.1 743.4,473.7 745.1,482.1 747.6,495.5 750.1,463.6 752.6,461.1 754.3,487.1 756.8,458.6 759.4,456.9 761.1,478.7 763.6,456.9 766.9,498.9 769.5,461.1 772.0,460.3 773.7,485.5 775.3,461.9 777.9,452.7 780.4,478.7 782.9,461.9 785.4,460.3 787.1,480.4 789.1,455.2 792.1,483.8 794.7,472.0 796.3,483.8 798.9,456.9 801.4,459.4 803.1,452.7 805.6,477.1 808.9,455.2 811.5,474.5 814.0,461.9 817.4,474.5 819.9,461.9 823.2,470.3 826.6,461.9 829.1,473.7 831.6,479.6 834.2,483.8 836.7,461.1 839.2,458.6 840.9,453.5 843.4,472.0 845.9,462.8 849.3,470.3 851.8,465.3 854.3,457.7 856.8,475.4 859.4,460.3 862.7,463.6 866.1,456.9 869.5,468.7 872.8,460.3 875.3,473.7 877.9,463.6 881.2,475.4 885.4,458.6 887.9,470.3 890.5,460.3 893.8,463.6 897.2,472.0 900.5,499.7 903.1,470.3 905.6,461.9 907.3,485.5 908.9,455.2 910.6,453.5" fill="none" stroke="#fff" stroke-width="2.3" stroke-linejoin="round"/>
<polyline points="273.4,456.9 280.1,456.1 283.4,457.7 288.5,467.0 293.5,470.3 297.7,477.9 301.9,472.9 305.3,472.0 308.7,477.9 313.7,477.1 317.9,481.3 322.1,472.0 327.1,463.6 335.5,462.8 339.7,471.2 344.8,472.9 350.7,472.0 355.7,462.8 360.8,465.3 366.6,457.7 370.8,456.9 375.0,451.8 380.9,457.7 386.0,458.6 389.3,463.6 395.2,457.7 402.8,458.6 409.5,461.9 416.2,456.9 422.1,454.9 425.0,456.1 429.2,456.9 435.1,454.4 442.6,451.5 446.8,456.9 451.1,465.3 454.4,463.6 458.6,461.9 465.3,453.2 473.7,457.7 478.8,463.6 484.7,469.5 489.7,474.5 493.9,468.7 498.9,465.3 504.8,460.3 510.7,461.1 515.8,456.1 522.5,456.1 527.5,456.9 530.9,462.8 539.3,465.3 546.0,461.9 555.3,456.9 562.8,459.4 567.9,461.1 572.9,461.9 577.9,461.9 580.0,464.5 584.2,472.0 588.4,482.1 593.4,492.2 596.8,493.0 600.2,496.4 605.2,494.7 609.4,493.9 615.3,496.4 619.5,498.9 622.9,505.6 625.4,493.9 630.4,475.4 635.5,466.1 638.8,464.5 643.0,472.9 647.2,482.9 652.3,483.8 657.3,481.3 664.0,476.2 671.6,474.5 677.5,471.2 684.2,469.5 689.2,467.8 694.3,469.5 701.0,469.5 707.7,467.8 714.5,470.3 722.9,474.5 727.9,470.3 732.1,465.3 735.0,463.6 738.4,461.9 743.4,467.8 748.4,472.0 751.8,471.2 755.2,474.5 760.2,469.5 765.3,467.0 770.3,466.1 775.3,467.8 780.4,467.0 785.4,467.0 790.5,466.1 795.5,468.7 800.5,468.7 805.6,466.1 814.0,462.8 822.4,464.5 829.1,465.3 835.8,467.8 840.9,467.0 849.3,464.5 856.0,463.6 862.7,464.5 867.8,462.8 874.5,462.8 881.2,464.5 887.9,465.3 896.3,465.3 903.1,469.5 909.8,471.2" fill="none" stroke="#ff0000" stroke-width="2.2" stroke-linejoin="round"/>
<polyline points="273,460 430,460.3 580,460.3 735,464.5 911,467" fill="none" stroke="#1ee01e" stroke-width="2.5"/>
</g>
<text x="268" y="317.2" text-anchor="end" font-family="Liberation Sans" font-size="12" fill="#545454">0</text>
<text x="268" y="366.4" text-anchor="end" font-family="Liberation Sans" font-size="12" fill="#545454">-5</text>
<text x="268" y="415.5" text-anchor="end" font-family="Liberation Sans" font-size="12" fill="#545454">-10</text>
<text x="268" y="464.7" text-anchor="end" font-family="Liberation Sans" font-size="12" fill="#545454">-15</text>
<text x="268" y="513.9" text-anchor="end" font-family="Liberation Sans" font-size="12" fill="#545454">-20</text>
<text x="268" y="563.0" text-anchor="end" font-family="Liberation Sans" font-size="12" fill="#545454">-25</text>
<text x="268" y="612.2" text-anchor="end" font-family="Liberation Sans" font-size="12" fill="#545454">-30</text>
<text x="316.6" y="623" text-anchor="middle" font-family="Liberation Sans" font-size="12" fill="#545454">14:37:20</text>
<text x="422.6" y="623" text-anchor="middle" font-family="Liberation Sans" font-size="12" fill="#545454">14:37:40</text>
<text x="528.6" y="623" text-anchor="middle" font-family="Liberation Sans" font-size="12" fill="#545454">14:38:00</text>
<text x="634.6" y="623" text-anchor="middle" font-family="Liberation Sans" font-size="12" fill="#545454">14:38:20</text>
<text x="740.6" y="623" text-anchor="middle" font-family="Liberation Sans" font-size="12" fill="#545454">14:38:40</text>
<text x="846.6" y="623" text-anchor="middle" font-family="Liberation Sans" font-size="12" fill="#545454">14:39:00</text>
<rect x="282.5" y="584.5" width="17" height="13" fill="#000" stroke="#cccccc" stroke-width="1"/>
<rect x="284" y="586" width="14" height="10" fill="#fff"/>
<text x="304" y="595.5" font-family="Liberation Sans" font-size="12" fill="#b4b4b4">Momentary, LKFS</text>
<rect x="403.5" y="584.5" width="17" height="13" fill="#000" stroke="#cccccc" stroke-width="1"/>
<rect x="405" y="586" width="14" height="10" fill="#ff0000"/>
<text x="425" y="595.5" font-family="Liberation Sans" font-size="12" fill="#b4b4b4">Short-term, LKFS</text>
<rect x="523.5" y="584.5" width="17" height="13" fill="#000" stroke="#cccccc" stroke-width="1"/>
<rect x="525" y="586" width="14" height="10" fill="#00ee00"/>
<text x="545.5" y="595.5" font-family="Liberation Sans" font-size="12" fill="#b4b4b4">Long-term, LKFS</text>
</svg>
<div class="a" style="left:53px;top:101px;width:180px;height:146px;background:#000;border:1px solid #0b8a0b;border-radius:5px"></div>
<div class="t" style="left:59.5px;top:108.30px;font-size:15px;line-height:15px;color:#2cff2c;letter-spacing:-0.3px">PI:</div>
<div class="t" style="left:80.5px;top:109.51px;font-size:15px;line-height:15px;color:#2cff2c;font-family:'Liberation Mono',monospace;letter-spacing:-0.2px">8091</div>
<div class="t" style="left:124.5px;top:108.30px;font-size:15px;line-height:15px;color:#2cff2c;letter-spacing:-1px">PS:</div>
<div class="t" style="left:148px;top:112.19px;font-size:11.5px;line-height:11.5px;color:#2cff2c;font-family:'Liberation Mono',monospace;transform:scaleX(1.37);transform-origin:0 0">POWER&nbsp;FM</div>
<div class="t" style="left:59.5px;top:126.15px;font-size:14px;line-height:14px;color:#2cff2c;">RT:</div>
<div class="a" style="left:84px;top:124px;width:145px;height:17px;overflow:hidden"><div class="t" style="left:-8.2px;top:2.15px;font-size:14px;line-height:14px;font-weight:bold;color:#2cff2c;letter-spacing:0.15px">POWER FM - The Best</div></div>
<svg class="a" style="left:0;top:0" width="1077" height="684">
<circle cx="67.7" cy="154" r="6.9" fill="none" stroke="#2cff2c" stroke-width="1.9"/>
<circle cx="77" cy="154" r="6.9" fill="none" stroke="#2cff2c" stroke-width="1.9"/>
<path d="M59.00 172.16 A8.3 8.3 0 0 1 74.60 172.16" fill="none" stroke="#0c9a0c" stroke-width="0.9"/>
<path d="M60.32 172.64 A6.9 6.9 0 0 1 73.28 172.64" fill="none" stroke="#0c9a0c" stroke-width="0.9"/>
<circle cx="66.8" cy="175" r="3.2" fill="none" stroke="#0a7a0a" stroke-width="1"/>
<path d="M70.60 172.16 A8.3 8.3 0 0 1 86.20 172.16" fill="none" stroke="#0c9a0c" stroke-width="0.9"/>
<path d="M71.92 172.64 A6.9 6.9 0 0 1 84.88 172.64" fill="none" stroke="#0c9a0c" stroke-width="0.9"/>
<circle cx="78.4" cy="175" r="3.2" fill="none" stroke="#0a7a0a" stroke-width="1"/>
<path d="M61.97 170.95 A6.3 6.3 0 1 0 72.89 173.37" fill="none" stroke="#2cff2c" stroke-width="4.6"/>
<path d="M74.79 169.84 A6.3 6.3 0 1 1 72.94 178.15" fill="none" stroke="#2cff2c" stroke-width="4.6"/>
<circle cx="66.8" cy="175" r="1.5" fill="#000"/><circle cx="78.4" cy="175" r="1.5" fill="#000"/>
<polygon points="104.39,145.90 98.85,150.90 97.77,160.85 100.00,163.35 102.77,160.85" fill="#0b500b"/>
<polygon points="100.41,182.60 95.95,177.60 97.03,167.65 99.80,165.15 102.03,167.65" fill="#0b500b"/>
<polygon points="110.59,145.00 131.39,145.00 125.85,150.00 115.05,150.00" fill="#2cff2c"/>
<polygon points="111.95,178.50 122.75,178.50 127.21,183.50 106.41,183.50" fill="#2cff2c"/>
<polygon points="109.59,145.90 114.05,150.90 112.97,160.85 110.20,163.35 107.97,160.85" fill="#2cff2c"/>
<polygon points="132.19,145.90 126.65,150.90 125.57,160.85 127.80,163.35 130.57,160.85" fill="#2cff2c"/>
<polygon points="105.61,182.60 111.15,177.60 112.23,167.65 110.00,165.15 107.23,167.65" fill="#0b500b"/>
<polygon points="128.21,182.60 123.75,177.60 124.83,167.65 127.60,165.15 129.83,167.65" fill="#2cff2c"/>
<polygon points="111.00,164.25 113.77,161.75 124.57,161.75 126.80,164.25 124.03,166.75 113.23,166.75" fill="#2cff2c"/>
<polygon points="138.59,145.00 159.39,145.00 153.85,150.00 143.05,150.00" fill="#0b500b"/>
<polygon points="139.95,178.50 150.75,178.50 155.21,183.50 134.41,183.50" fill="#0b500b"/>
<polygon points="137.59,145.90 142.05,150.90 140.97,160.85 138.20,163.35 135.97,160.85" fill="#0b500b"/>
<polygon points="160.19,145.90 154.65,150.90 153.57,160.85 155.80,163.35 158.57,160.85" fill="#2cff2c"/>
<polygon points="133.61,182.60 139.15,177.60 140.23,167.65 138.00,165.15 135.23,167.65" fill="#0b500b"/>
<polygon points="156.21,182.60 151.75,177.60 152.83,167.65 155.60,165.15 157.83,167.65" fill="#2cff2c"/>
<polygon points="139.00,164.25 141.77,161.75 152.57,161.75 154.80,164.25 152.03,166.75 141.23,166.75" fill="#0b500b"/>
<rect x="162" y="178" width="5.7" height="5.5" fill="#2cff2c"/>
<polygon points="176.09,145.00 196.89,145.00 191.35,150.00 180.55,150.00" fill="#0b500b"/>
<polygon points="177.45,178.50 188.25,178.50 192.71,183.50 171.91,183.50" fill="#0b500b"/>
<polygon points="175.09,145.90 179.55,150.90 178.47,160.85 175.70,163.35 173.47,160.85" fill="#0b500b"/>
<polygon points="197.69,145.90 192.15,150.90 191.07,160.85 193.30,163.35 196.07,160.85" fill="#2cff2c"/>
<polygon points="171.11,182.60 176.65,177.60 177.73,167.65 175.50,165.15 172.73,167.65" fill="#0b500b"/>
<polygon points="193.71,182.60 189.25,177.60 190.33,167.65 193.10,165.15 195.33,167.65" fill="#2cff2c"/>
<polygon points="176.50,164.25 179.27,161.75 190.07,161.75 192.30,164.25 189.53,166.75 178.73,166.75" fill="#0b500b"/>
<polygon points="203.89,145.00 224.69,145.00 219.15,150.00 208.35,150.00" fill="#2cff2c"/>
<polygon points="205.25,178.50 216.05,178.50 220.51,183.50 199.71,183.50" fill="#2cff2c"/>
<polygon points="202.89,145.90 207.35,150.90 206.27,160.85 203.50,163.35 201.27,160.85" fill="#2cff2c"/>
<polygon points="225.49,145.90 219.95,150.90 218.87,160.85 221.10,163.35 223.87,160.85" fill="#2cff2c"/>
<polygon points="198.91,182.60 204.45,177.60 205.53,167.65 203.30,165.15 200.53,167.65" fill="#2cff2c"/>
<polygon points="221.51,182.60 217.05,177.60 218.13,167.65 220.90,165.15 223.13,167.65" fill="#2cff2c"/>
<polygon points="204.30,164.25 207.07,161.75 217.87,161.75 220.10,164.25 217.33,166.75 206.53,166.75" fill="#0b500b"/>
<rect x="59" y="196" width="29" height="2" fill="#0e7e0e"/>
<rect x="112" y="196" width="30" height="2" fill="#0e7e0e"/>
<rect x="59" y="196" width="2" height="5" fill="#0e7e0e"/>
<rect x="140" y="196" width="2" height="5" fill="#0e7e0e"/>
<rect x="145" y="196" width="16" height="2" fill="#0e7e0e"/>
<rect x="209" y="196" width="17" height="2" fill="#0e7e0e"/>
<rect x="145" y="196" width="2" height="5" fill="#0e7e0e"/>
<rect x="224" y="196" width="2" height="5" fill="#0e7e0e"/>
<rect x="59" y="235" width="60" height="2" fill="#0e7e0e"/>
<rect x="169" y="235" width="57" height="2" fill="#0e7e0e"/>
<rect x="59" y="232" width="2" height="5" fill="#0e7e0e"/>
<rect x="224" y="232" width="2" height="5" fill="#0e7e0e"/>
</svg>
<div class="t" style="left:90.5px;top:191.86px;font-size:10.8px;line-height:10.8px;color:#2cff2c;letter-spacing:-0.6px">ATT</div>
<div class="t" style="left:163.8px;top:192.11px;font-size:10.5px;line-height:10.5px;color:#2cff2c;letter-spacing:-0.45px">QUALITY</div>
<div class="t" style="left:122px;top:231.61px;font-size:10.5px;line-height:10.5px;color:#2cff2c;letter-spacing:-0.6px">ALARMS</div>
<div class="a" style="left:59px;top:203px;width:27px;height:12px;background:#0b3c0b;color:#031a03;font-size:11px;line-height:13px;text-align:center;letter-spacing:-0.5px;overflow:hidden">-10</div>
<div class="a" style="left:87px;top:203px;width:27px;height:12px;background:#0b3c0b;color:#031a03;font-size:11px;line-height:13px;text-align:center;letter-spacing:-0.5px;overflow:hidden">-20</div>
<div class="a" style="left:115px;top:203px;width:27px;height:12px;background:#0b3c0b;color:#031a03;font-size:11px;line-height:13px;text-align:center;letter-spacing:-0.5px;overflow:hidden">-30</div>
<div class="a" style="left:145px;top:203px;width:20px;height:12px;background:#0b3c0b;color:#031a03;font-size:11px;line-height:13px;text-align:center;letter-spacing:-0.3px;overflow:hidden">LO</div>
<div class="a" style="left:166px;top:203px;width:39px;height:12px;background:#0b3c0b;color:#031a03;font-size:11px;line-height:13px;text-align:center;letter-spacing:-0.3px;overflow:hidden">GOOD</div>
<div class="a" style="left:206px;top:203px;width:20px;height:12px;background:#0a6e0a;color:#3cf03c;font-size:11px;line-height:13px;text-align:center;letter-spacing:-0.3px;overflow:hidden">HI</div>
<div class="a" style="left:59px;top:218px;width:27px;height:12px;background:#0b3c0b;color:#031a03;font-size:11px;line-height:13px;text-align:center;letter-spacing:0px;overflow:hidden">1</div>
<div class="a" style="left:87px;top:218px;width:27px;height:12px;background:#0b3c0b;color:#031a03;font-size:11px;line-height:13px;text-align:center;letter-spacing:0px;overflow:hidden">2</div>
<div class="a" style="left:115px;top:218px;width:27px;height:12px;background:#0b3c0b;color:#031a03;font-size:11px;line-height:13px;text-align:center;letter-spacing:0px;overflow:hidden">3</div>
<div class="a" style="left:143px;top:218px;width:27px;height:12px;background:#0b3c0b;color:#031a03;font-size:11px;line-height:13px;text-align:center;letter-spacing:0px;overflow:hidden">4</div>
<div class="a" style="left:171px;top:218px;width:27px;height:12px;background:#0b3c0b;color:#031a03;font-size:11px;line-height:13px;text-align:center;letter-spacing:0px;overflow:hidden">5</div>
<div class="a" style="left:199px;top:218px;width:27px;height:12px;background:#0b3c0b;color:#031a03;font-size:11px;line-height:13px;text-align:center;letter-spacing:0px;overflow:hidden">6</div>
<div class="t" style="left:52.5px;top:251.8px;font-size:12px;line-height:12px;font-weight:bold">MPX</div>
<div class="t" style="left:52.5px;top:267.8px;font-size:12px;line-height:12px;font-weight:bold">RF</div>
<div class="a" style="left:91px;top:252px;width:142px;height:12px;background:#000"></div>
<svg class="a" style="left:0;top:0" width="1077" height="684"><rect x="92" y="253" width="2" height="10" fill="#22ff22"/><rect x="95" y="253" width="2" height="10" fill="#22ff22"/><rect x="98" y="253" width="2" height="10" fill="#22ff22"/><rect x="101" y="253" width="2" height="10" fill="#22ff22"/><rect x="104" y="253" width="2" height="10" fill="#22ff22"/><rect x="107" y="253" width="2" height="10" fill="#22ff22"/><rect x="110" y="253" width="2" height="10" fill="#22ff22"/><rect x="113" y="253" width="2" height="10" fill="#22ff22"/><rect x="116" y="253" width="2" height="10" fill="#22ff22"/><rect x="119" y="253" width="2" height="10" fill="#22ff22"/><rect x="122" y="253" width="2" height="10" fill="#22ff22"/><rect x="125" y="253" width="2" height="10" fill="#22ff22"/><rect x="128" y="253" width="2" height="10" fill="#22ff22"/><rect x="131" y="253" width="2" height="10" fill="#22ff22"/><rect x="134" y="253" width="2" height="10" fill="#22ff22"/><rect x="137" y="253" width="2" height="10" fill="#22ff22"/><rect x="140" y="253" width="2" height="10" fill="#22ff22"/><rect x="143" y="253" width="2" height="10" fill="#22ff22"/><rect x="146" y="253" width="2" height="10" fill="#22ff22"/><rect x="149" y="253" width="2" height="10" fill="#22ff22"/><rect x="152" y="253" width="2" height="10" fill="#22ff22"/><rect x="155" y="253" width="2" height="10" fill="#22ff22"/><rect x="158" y="253" width="2" height="10" fill="#22ff22"/><rect x="161" y="253" width="2" height="10" fill="#22ff22"/><rect x="164" y="253" width="2" height="10" fill="#22ff22"/><rect x="167" y="253" width="2" height="10" fill="#22ff22"/><rect x="170" y="253" width="2" height="10" fill="#22ff22"/><rect x="173" y="253" width="2" height="10" fill="#22ff22"/><rect x="176" y="253" width="2" height="10" fill="#22ff22"/><rect x="179" y="253" width="2" height="10" fill="#5e5e00"/><rect x="182" y="253" width="2" height="10" fill="#5e5e00"/><rect x="185" y="253" width="2" height="10" fill="#560000"/><rect x="188" y="253" width="2" height="10" fill="#560000"/><rect x="191" y="253" width="2" height="10" fill="#560000"/><rect x="194" y="253" width="2" height="10" fill="#560000"/><rect x="197" y="253" width="2" height="10" fill="#560000"/><rect x="200" y="253" width="2" height="10" fill="#560000"/><rect x="203" y="253" width="2" height="10" fill="#560000"/><rect x="206" y="253" width="2" height="10" fill="#560000"/><rect x="209" y="253" width="2" height="10" fill="#560000"/><rect x="212" y="253" width="2" height="10" fill="#560000"/><rect x="215" y="253" width="2" height="10" fill="#560000"/><rect x="218" y="253" width="2" height="10" fill="#560000"/><rect x="221" y="253" width="2" height="10" fill="#560000"/><rect x="224" y="253" width="2" height="10" fill="#560000"/><rect x="227" y="253" width="2" height="10" fill="#560000"/><rect x="230" y="253" width="2" height="10" fill="#560000"/></svg>
<div class="a" style="left:91px;top:268px;width:142px;height:12px;background:#000"></div>
<svg class="a" style="left:0;top:0" width="1077" height="684"><rect x="92" y="269" width="2" height="10" fill="#ff1010"/><rect x="95" y="269" width="2" height="10" fill="#ff1010"/><rect x="98" y="269" width="2" height="10" fill="#ff1010"/><rect x="101" y="269" width="2" height="10" fill="#ff1010"/><rect x="104" y="269" width="2" height="10" fill="#ff1010"/><rect x="107" y="269" width="2" height="10" fill="#ff1010"/><rect x="110" y="269" width="2" height="10" fill="#ff1010"/><rect x="113" y="269" width="2" height="10" fill="#ff1010"/><rect x="116" y="269" width="2" height="10" fill="#22ff22"/><rect x="119" y="269" width="2" height="10" fill="#22ff22"/><rect x="122" y="269" width="2" height="10" fill="#22ff22"/><rect x="125" y="269" width="2" height="10" fill="#22ff22"/><rect x="128" y="269" width="2" height="10" fill="#22ff22"/><rect x="131" y="269" width="2" height="10" fill="#22ff22"/><rect x="134" y="269" width="2" height="10" fill="#22ff22"/><rect x="137" y="269" width="2" height="10" fill="#22ff22"/><rect x="140" y="269" width="2" height="10" fill="#22ff22"/><rect x="143" y="269" width="2" height="10" fill="#22ff22"/><rect x="146" y="269" width="2" height="10" fill="#22ff22"/><rect x="149" y="269" width="2" height="10" fill="#22ff22"/><rect x="152" y="269" width="2" height="10" fill="#22ff22"/><rect x="155" y="269" width="2" height="10" fill="#22ff22"/><rect x="158" y="269" width="2" height="10" fill="#22ff22"/><rect x="161" y="269" width="2" height="10" fill="#22ff22"/><rect x="164" y="269" width="2" height="10" fill="#22ff22"/><rect x="167" y="269" width="2" height="10" fill="#22ff22"/><rect x="170" y="269" width="2" height="10" fill="#22ff22"/><rect x="173" y="269" width="2" height="10" fill="#22ff22"/><rect x="176" y="269" width="2" height="10" fill="#22ff22"/><rect x="179" y="269" width="2" height="10" fill="#22ff22"/><rect x="182" y="269" width="2" height="10" fill="#22ff22"/><rect x="185" y="269" width="2" height="10" fill="#22ff22"/><rect x="188" y="269" width="2" height="10" fill="#22ff22"/><rect x="191" y="269" width="2" height="10" fill="#22ff22"/><rect x="194" y="269" width="2" height="10" fill="#0c4a0c"/><rect x="197" y="269" width="2" height="10" fill="#0c4a0c"/><rect x="200" y="269" width="2" height="10" fill="#0c4a0c"/><rect x="203" y="269" width="2" height="10" fill="#0c4a0c"/><rect x="206" y="269" width="2" height="10" fill="#0c4a0c"/><rect x="209" y="269" width="2" height="10" fill="#0c4a0c"/><rect x="212" y="269" width="2" height="10" fill="#0c4a0c"/><rect x="215" y="269" width="2" height="10" fill="#0c4a0c"/><rect x="218" y="269" width="2" height="10" fill="#0c4a0c"/><rect x="221" y="269" width="2" height="10" fill="#0c4a0c"/><rect x="224" y="269" width="2" height="10" fill="#0c4a0c"/><rect x="227" y="269" width="2" height="10" fill="#0c4a0c"/><rect x="230" y="269" width="2" height="10" fill="#0c4a0c"/></svg>
<div class="a" style="left:57px;top:305px;width:82px;height:24px;border:1.5px solid #1a1a1a;background:#fff"></div>
<div class="t" style="right:943px;top:311.74px;font-size:13.3px;line-height:13.3px;font-style:italic;color:#9a9a9a;letter-spacing:-0.2px">frequency</div>
<div class="btn sm" style="left:145.5px;top:303px;width:86px;height:28.6px;line-height:26.6px;letter-spacing:0px">Set</div>
<div class="btn sm" style="left:55px;top:338px;width:86px;height:28.6px;line-height:26.6px;letter-spacing:-0.5px">POWER FM</div>
<div class="btn sm" style="left:145.5px;top:338px;width:86px;height:28.6px;line-height:26.6px;letter-spacing:-0.4px">ENERGY</div>
<div class="btn sm" style="left:55px;top:373px;width:86px;height:28.6px;line-height:26.6px;letter-spacing:0px">Radio 1</div>
<div class="btn sm" style="left:145.5px;top:373px;width:86px;height:28.6px;line-height:26.6px;letter-spacing:0px">Ch.4 98.10</div>
<div class="btn sm" style="left:55px;top:408px;width:86px;height:28.6px;line-height:26.6px;letter-spacing:0px">Ch.5 98.10</div>
<div class="btn sm" style="left:145.5px;top:408px;width:86px;height:28.6px;line-height:26.6px;letter-spacing:0px">Ch.6 98.10</div>
<div class="t" style="left:-102px;width:400px;text-align:center;top:604.57px;font-size:13.5px;line-height:13.5px;">28 Jan 2019</div>
<div class="t" style="left:-102.2px;width:400px;text-align:center;top:619.07px;font-size:13.5px;line-height:13.5px;letter-spacing:0.6px">14:39:11</div>
<div class="t" style="left:-12px;width:400px;text-align:center;top:604.57px;font-size:13.5px;line-height:13.5px;letter-spacing:-0.35px">Session time:</div>
<div class="t" style="left:-11.5px;width:400px;text-align:center;top:616.61px;font-size:17px;line-height:17px;">&#8734;</div>
</body></html>
